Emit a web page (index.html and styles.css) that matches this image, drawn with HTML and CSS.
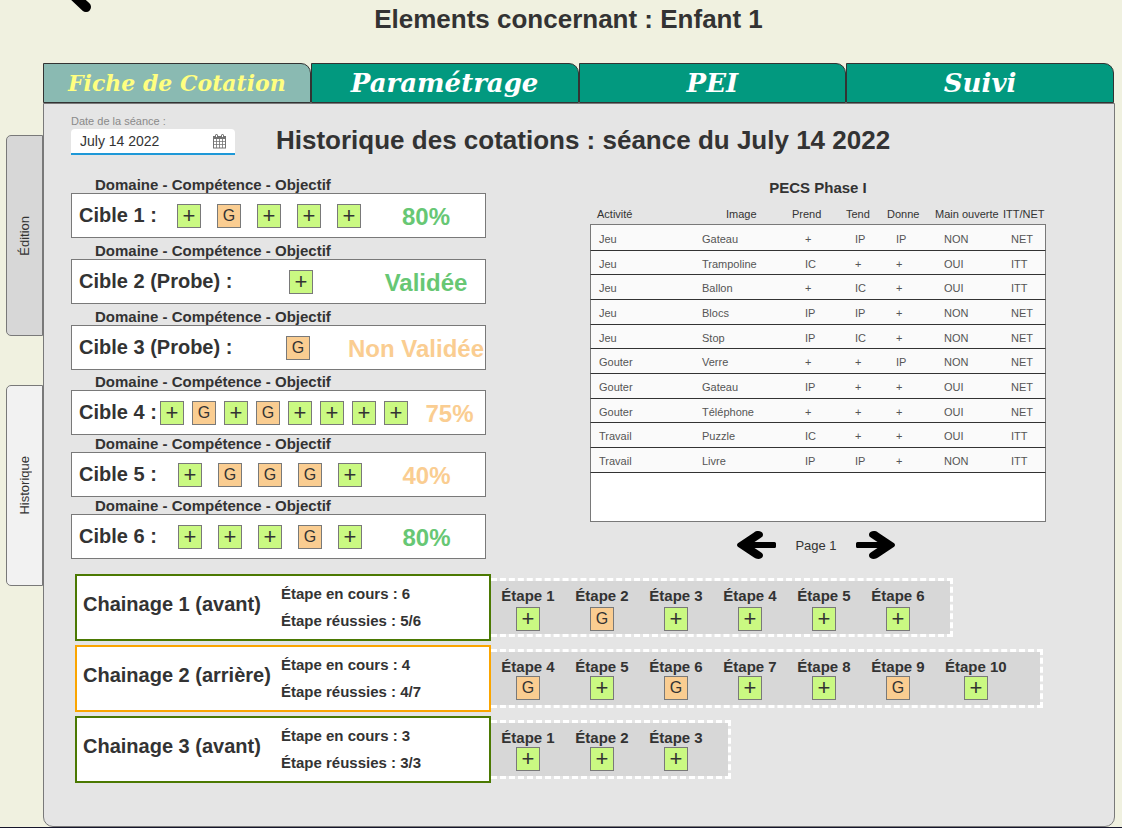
FILE: index.html
```html
<!DOCTYPE html>
<html lang="fr">
<head>
<meta charset="utf-8">
<title>Fiche de Cotation</title>
<link rel="stylesheet" href="styles.css">
</head>
<body>
<header class="page-header">
  <button class="back" type="button" aria-label="Retour">
    <svg width="64" height="58" viewBox="0 0 64 58" aria-hidden="true"><path d="M37 53 6 24 37 -5M6 24H60" fill="none" stroke="#000" stroke-width="10" stroke-linecap="round"/></svg>
  </button>
  <h1>Elements concernant : Enfant 1</h1>
</header>
<div class="workspace">
  <nav class="side-tabs" aria-label="Mode">
    <button class="side-tab" type="button"><span>Édition</span></button>
    <button class="side-tab side-tab--active" type="button"><span>Historique</span></button>
  </nav>
  <main class="main">
    <nav class="tabs" aria-label="Sections">
      <button class="tab tab--active" type="button">Fiche de Cotation</button>
      <button class="tab" type="button">Paramétrage</button>
      <button class="tab" type="button">PEI</button>
      <button class="tab" type="button">Suivi</button>
    </nav>
    <section class="panel">
      <div class="panel-head">
        <div class="date">
          <label for="seance">Date de la séance :</label>
          <div class="date-field">
            <input id="seance" type="text" value="July 14 2022">
            <svg width="13" height="15" viewBox="0 0 13 15" aria-hidden="true"><path d="M0 2h13v12.500H0z" fill="#737373"/><path d="M1 5h2.200v2.200H1zM4 5h2.200v2.200H4zM7 5h2.200v2.200H7zM10 5h2v2.200h-2zM1 8h2.200v2.200H1zM4 8h2.200v2.200H4zM7 8h2.200v2.200H7zM10 8h2v2.200h-2zM1 11h2.200v2.500H1zM4 11h2.200v2.500H4zM7 11h2.200v2.500H7zM10 11h2v2.500h-2z" fill="#fff"/><path d="M3.500 1.500v1.500M9.500 1.500v1.500" stroke="#737373" stroke-width="3" stroke-linecap="round"/><path d="M3.500 1v2M9.500 1v2" stroke="#fff" stroke-width="1"/></svg>
          </div>
        </div>
        <h2>Historique des cotations : séance du July 14 2022</h2>
      </div>
      <div class="columns">
        <div class="cibles">
          <article class="cible">
            <p class="domain">Domaine - Compétence - Objectif</p>
            <div class="cible-box"><h3>Cible 1 :</h3><div class="marks"><span class="mark plus">+</span><span class="mark help">G</span><span class="mark plus">+</span><span class="mark plus">+</span><span class="mark plus">+</span></div><strong class="result good">80%</strong></div>
          </article>
          <article class="cible probe">
            <p class="domain">Domaine - Compétence - Objectif</p>
            <div class="cible-box"><h3>Cible 2 (Probe) :</h3><div class="marks"><span class="mark plus">+</span></div><strong class="result good">Validée</strong></div>
          </article>
          <article class="cible probe probe--failed">
            <p class="domain">Domaine - Compétence - Objectif</p>
            <div class="cible-box"><h3>Cible 3 (Probe) :</h3><div class="marks"><span class="mark help">G</span></div><strong class="result weak">Non Validée</strong></div>
          </article>
          <article class="cible dense">
            <p class="domain">Domaine - Compétence - Objectif</p>
            <div class="cible-box"><h3>Cible 4 :</h3><div class="marks"><span class="mark plus">+</span><span class="mark help">G</span><span class="mark plus">+</span><span class="mark help">G</span><span class="mark plus">+</span><span class="mark plus">+</span><span class="mark plus">+</span><span class="mark plus">+</span></div><strong class="result weak">75%</strong></div>
          </article>
          <article class="cible tight">
            <p class="domain">Domaine - Compétence - Objectif</p>
            <div class="cible-box"><h3>Cible 5 :</h3><div class="marks"><span class="mark plus">+</span><span class="mark help">G</span><span class="mark help">G</span><span class="mark help">G</span><span class="mark plus">+</span></div><strong class="result weak">40%</strong></div>
          </article>
          <article class="cible tight">
            <p class="domain">Domaine - Compétence - Objectif</p>
            <div class="cible-box"><h3>Cible 6 :</h3><div class="marks"><span class="mark plus">+</span><span class="mark plus">+</span><span class="mark plus">+</span><span class="mark help">G</span><span class="mark plus">+</span></div><strong class="result good">80%</strong></div>
          </article>
        </div>
        <section class="pecs">
          <table>
            <caption>PECS Phase I</caption>
            <colgroup><col class="c-activity"><col class="c-image"><col class="c-take"><col class="c-reach"><col class="c-give"><col class="c-hand"><col class="c-type"></colgroup>
            <thead><tr><th>Activité</th><th>Image</th><th>Prend</th><th>Tend</th><th>Donne</th><th>Main ouverte</th><th>ITT/NET</th></tr></thead>
            <tbody>
              <tr><td>Jeu</td><td>Gateau</td><td>+</td><td>IP</td><td>IP</td><td>NON</td><td>NET</td></tr>
              <tr><td>Jeu</td><td>Trampoline</td><td>IC</td><td>+</td><td>+</td><td>OUI</td><td>ITT</td></tr>
              <tr><td>Jeu</td><td>Ballon</td><td>+</td><td>IC</td><td>+</td><td>OUI</td><td>ITT</td></tr>
              <tr><td>Jeu</td><td>Blocs</td><td>IP</td><td>IP</td><td>+</td><td>NON</td><td>NET</td></tr>
              <tr><td>Jeu</td><td>Stop</td><td>IP</td><td>IC</td><td>+</td><td>NON</td><td>NET</td></tr>
              <tr><td>Gouter</td><td>Verre</td><td>+</td><td>+</td><td>IP</td><td>NON</td><td>NET</td></tr>
              <tr><td>Gouter</td><td>Gateau</td><td>IP</td><td>+</td><td>+</td><td>OUI</td><td>NET</td></tr>
              <tr><td>Gouter</td><td>Téléphone</td><td>+</td><td>+</td><td>+</td><td>OUI</td><td>NET</td></tr>
              <tr><td>Travail</td><td>Puzzle</td><td>IC</td><td>+</td><td>+</td><td>OUI</td><td>ITT</td></tr>
              <tr><td>Travail</td><td>Livre</td><td>IP</td><td>IP</td><td>+</td><td>NON</td><td>ITT</td></tr>
            </tbody>
            <tfoot><tr><td colspan="7"></td></tr></tfoot>
          </table>
          <nav class="pager" aria-label="Pages">
            <button type="button" aria-label="Page précédente"><svg width="39" height="28" viewBox="0 0 39 28" aria-hidden="true"><path d="M0 14C0 13 1 12 2 11.500L17 1.500C20-1 26 0 26 3.500 26 5.500 25 6 23.500 7L17.500 11H37.500Q39 11 39 12.500V15.500Q39 17 37.500 17H17.500L23.500 21C25 22 26 22.500 26 24.500 26 28 20 29 17 26.500L2 16.500C1 16 0 15 0 14z"/></svg></button>
            <span>Page 1</span>
            <button type="button" aria-label="Page suivante"><svg width="39" height="28" viewBox="0 0 39 28" aria-hidden="true"><path transform="matrix(-1 0 0 1 39 0)" d="M0 14C0 13 1 12 2 11.500L17 1.500C20-1 26 0 26 3.500 26 5.500 25 6 23.500 7L17.500 11H37.500Q39 11 39 12.500V15.500Q39 17 37.500 17H17.500L23.500 21C25 22 26 22.500 26 24.500 26 28 20 29 17 26.500L2 16.500C1 16 0 15 0 14z"/></svg></button>
          </nav>
        </section>
      </div>
      <div class="chains">
        <article class="chain chain--spaced">
          <div class="chain-box"><h3>Chainage 1 (avant)</h3><div class="progress"><p>Étape en cours : 6</p><p>Étape réussies : 5/6</p></div></div>
          <ol class="steps">
            <li>Étape 1<span class="mark plus">+</span></li><li>Étape 2<span class="mark help">G</span></li><li>Étape 3<span class="mark plus">+</span></li><li>Étape 4<span class="mark plus">+</span></li><li>Étape 5<span class="mark plus">+</span></li><li>Étape 6<span class="mark plus">+</span></li>
          </ol>
        </article>
        <article class="chain chain--running">
          <div class="chain-box"><h3>Chainage 2 (arrière)</h3><div class="progress"><p>Étape en cours : 4</p><p>Étape réussies : 4/7</p></div></div>
          <ol class="steps">
            <li>Étape 4<span class="mark help">G</span></li><li>Étape 5<span class="mark plus">+</span></li><li>Étape 6<span class="mark help">G</span></li><li>Étape 7<span class="mark plus">+</span></li><li>Étape 8<span class="mark plus">+</span></li><li>Étape 9<span class="mark help">G</span></li><li>Étape 10<span class="mark plus">+</span></li>
          </ol>
        </article>
        <article class="chain">
          <div class="chain-box"><h3>Chainage 3 (avant)</h3><div class="progress"><p>Étape en cours : 3</p><p>Étape réussies : 3/3</p></div></div>
          <ol class="steps">
            <li>Étape 1<span class="mark plus">+</span></li><li>Étape 2<span class="mark plus">+</span></li><li>Étape 3<span class="mark plus">+</span></li>
          </ol>
        </article>
      </div>
    </section>
  </main>
</div>
</body>
</html>
```

FILE: styles.css
```css
* { box-sizing: border-box; }
body, h1, h2, h3, p, ol { margin: 0; padding: 0; }
body {
  display: flex;
  flex-direction: column;
  min-height: 100vh;
  background: #f0f1e0;
  border-bottom: 1px solid #15152b;
  color: #333;
  font-family: "Liberation Sans", Arial, sans-serif;
}
button { padding: 0; border: 0; background: none; color: inherit; font: inherit; cursor: pointer; }
svg { display: block; }

.page-header { position: relative; height: 63px; padding: 4px 0 0 15px; overflow: hidden; text-align: center; }
.page-header h1 { font-size: 26px; line-height: 30px; }
.back { position: absolute; left: 49px; top: -46px; }

.workspace { display: flex; flex: 1; padding: 0 7px 0 6px; }
.side-tabs { display: flex; flex: none; flex-direction: column; gap: 50px; width: 37px; padding-top: 72px; }
.side-tab {
  display: flex;
  align-items: center;
  justify-content: center;
  height: 201px;
  background: #d7d7d7;
  border: 1px solid #797979;
  border-radius: 5px 0 0 5px;
  font-size: 13px;
}
.side-tab + .side-tab { margin-top: -1px; }
.side-tab--active { background: #f2f2f2; }
.side-tab span { writing-mode: vertical-rl; transform: rotate(180deg); }

.main { display: flex; flex: 1; flex-direction: column; min-width: 0; }
.tabs { display: grid; grid-template-columns: repeat(4, 1fr); padding-right: 1px; }
.tab {
  height: 40px;
  background: #02997f;
  border: 1px solid #333;
  border-radius: 0 10px 0 0;
  color: #fff;
  font: italic bold 26px/38px "DejaVu Serif", Georgia, serif;
}
.tab--active { background: #8abab2; color: #ffff80; font-size: 22px; }
.panel {
  flex: 1;
  padding-bottom: 40px;
  background: #e5e5e5;
  border: 1px solid #797979;
  border-radius: 0 0 10px 10px;
}

.panel-head { display: flex; gap: 41px; padding: 10px 27px 0; }
.date { width: 164px; }
.date label { display: block; padding-bottom: 1px; color: #8a8a8a; font-size: 11px; line-height: 14px; }
.date-field {
  display: flex;
  align-items: center;
  height: 26px;
  padding: 0 9px;
  background: #fff;
  border-bottom: 2px solid #1e98d7;
  border-radius: 4px 4px 0 0;
}
.date-field input { flex: 1; min-width: 0; padding: 0; border: 0; outline: 0; background: none; color: #333; font: 14px "Liberation Sans", Arial, sans-serif; }
.panel-head h2 { padding-top: 11px; font-size: 26px; line-height: 30px; }

.columns { display: grid; grid-template-columns: 415fr 456fr; gap: 104px; padding: 21px 68px 0 27px; }
.domain { padding-left: 24px; font-size: 15px; font-weight: bold; line-height: 17px; }
.cible { margin-bottom: 4px; }
.cible.probe--failed { margin-bottom: 3px; }
.cible.tight, .cible.dense { margin-bottom: 0; }
.cible-box { display: flex; align-items: center; height: 45px; padding-left: 7px; background: #fff; border: 1px solid #797979; }
.cible h3 { flex: none; width: 98px; font-size: 20px; }
.marks { display: flex; flex: none; gap: 16px; }
.mark {
  display: flex;
  align-items: center;
  justify-content: center;
  width: 24px;
  height: 24px;
  border: 1px solid #797979;
  font-weight: normal;
  line-height: 22px;
}
.plus { background: #caf982; font-size: 22px; }
.help { background: #facd91; font-size: 16px; }
.result { flex: 1; padding: 2px 0 0 6px; font-size: 24px; text-align: center; white-space: nowrap; }
.good { color: #67c774; }
.weak { color: #facd91; }
.probe h3 { width: 210px; }
.probe .result { padding-left: 54px; }
.probe--failed h3 { width: 207px; }
.probe--failed .result { padding-left: 37px; }
.dense h3 { width: 81px; }
.dense .marks { gap: 8px; }
.tight h3 { width: 99px; }

.pecs table { width: 100%; table-layout: fixed; border-collapse: separate; border-spacing: 0; font-size: 11px; }
.pecs caption { padding-bottom: 6px; font-size: 15px; font-weight: bold; line-height: 23px; }
.c-activity { width: 104px; }
.c-image { width: 91px; }
.c-take { width: 54px; }
.c-reach { width: 41px; }
.c-give { width: 48px; }
.c-hand { width: 68px; }
.c-type { width: 50px; }
.pecs th { height: 19px; padding: 0 0 2px 7px; font-weight: normal; text-align: left; white-space: nowrap; }
.pecs th:nth-child(2) { padding-left: 32px; }
.pecs td { height: 25px; padding: 2px 0 0 16px; background: #fafafa; border-bottom: 1px solid #333; color: #555; }
.pecs tr:nth-child(3n + 2) td { height: 24px; }
.pecs td:first-child { padding-left: 8px; border-left: 1px solid #797979; }
.pecs td:nth-child(2) { padding-left: 8px; }
.pecs td:nth-child(3) { padding-left: 20px; }
.pecs td:last-child { padding-left: 15px; border-right: 1px solid #797979; }
.pecs tbody tr:first-child td { height: 27px; border-top: 1px solid #797979; }
.pecs tfoot td { height: 49px; background: #fff; border-bottom-color: #797979; }
.pager { display: flex; align-items: center; justify-content: center; gap: 18px; padding: 9px 4px 0 0; font-size: 13px; }
.pager span { width: 44px; text-align: center; }

.chains { display: grid; gap: 4px; padding: 15px 27px 0 31px; }
.chain { display: flex; align-items: center; }
.chain-box { display: flex; flex: none; width: 416px; height: 67px; padding: 0 6px; background: #fff; border: 2px solid #4b7902; }
.chain--running .chain-box { border-color: #faa500; }
.chain h3 { flex: none; width: 198px; padding-top: 16px; font-size: 20px; line-height: 24px; white-space: nowrap; }
.progress { padding-top: 4px; font-size: 15px; font-weight: bold; line-height: 27px; }
.steps {
  display: flex;
  gap: 20px;
  height: 59px;
  padding: 6px 25px 0 10px;
  background: #d7d7d7;
  background-clip: padding-box;
  border: 3px dashed #fff;
  border-left: 0;
  list-style: none;
}
.steps li { display: flex; flex-direction: column; align-items: center; min-width: 54px; font-size: 15px; font-weight: bold; line-height: 18px; white-space: nowrap; }
.chain--spaced li { gap: 2px; }
.chain--running .steps { padding-right: 33px; }
```
